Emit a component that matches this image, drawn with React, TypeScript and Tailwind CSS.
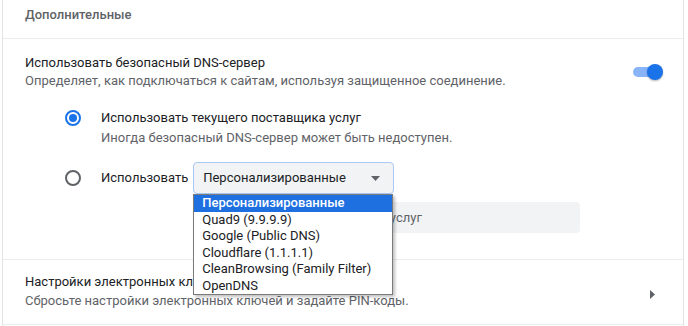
import React from "react";

// Блок «Дополнительные» настроек безопасности с раскрытым списком DNS-провайдеров

const providers = [
  "Персонализированные",
  "Quad9 (9.9.9.9)",
  "Google (Public DNS)",
  "Cloudflare (1.1.1.1)",
  "CleanBrowsing (Family Filter)",
  "OpenDNS",
];

function Radio({ checked }: { checked?: boolean }) {
  return (
    <span
      className={
        checked
          ? "flex h-4 w-4 shrink-0 items-center justify-center rounded-full border-2 border-[#1a73e8]"
          : "flex h-4 w-4 shrink-0 items-center justify-center rounded-full border-2 border-[#5f6368]"
      }
    >
      {checked && <span className="h-2 w-2 rounded-full bg-[#1a73e8]" />}
    </span>
  );
}

function Toggle() {
  return (
    <div className="relative h-4 w-[30px]">
      <div className="absolute left-0 top-[3px] h-[10px] w-[28px] rounded-full bg-[#8ab4f8]" />
      <div className="absolute right-0 top-0 h-4 w-4 rounded-full bg-[#1a73e8] shadow-[0_1px_2px_rgba(0,0,0,0.3)]" />
    </div>
  );
}

export default function App() {
  return (
    <div className="h-[326px] w-[688px] overflow-hidden bg-white font-['Roboto',_'Liberation_Sans',_sans-serif] text-[13px] text-[#202124]">
      <div className="ml-[2px] h-full w-[682px] border-x border-[#e3e3e3]">
        <div className="h-[39px] border-b border-[#ececec] pl-[22px] pt-[6px] font-medium leading-[17px] text-[#5f6368]">
          Дополнительные
        </div>

        <div className="flex items-center pl-[22px] pr-[20px] pt-[15px]">
          <div className="flex-1">
            <div className="leading-[18px]">Использовать безопасный DNS-сервер</div>
            <div className="leading-[18px] text-[#5f6368]">
              Определяет, как подключаться к сайтам, используя защищенное соединение.
            </div>
          </div>
          <Toggle />
        </div>

        <div className="pl-[62px] pt-[18px]">
          <div className="flex items-start">
            <div className="flex h-5 w-[36px] items-center">
              <Radio checked />
            </div>
            <div>
              <div className="leading-[20px]">Использовать текущего поставщика услуг</div>
              <div className="leading-[19px] text-[#5f6368]">
                Иногда безопасный DNS-сервер может быть недоступен.
              </div>
            </div>
          </div>

          <div className="mt-[15px] flex items-center">
            <div className="w-[36px]">
              <Radio />
            </div>
            <span className="mr-[5px]">Использовать</span>
            <div className="relative">
              <div className="flex h-[32px] w-[201px] items-center justify-between rounded-[4px] border border-[#a9c8f5] bg-[#f1f3f4] pl-[9px] pr-[13px]">
                <span>Персонализированные</span>
                <svg width="9" height="5" viewBox="0 0 9 5">
                  <path d="M0 0h9L4.5 5z" fill="#5f6368" />
                </svg>
              </div>
              <div className="absolute left-0 top-[32px] z-10 w-[200px] border border-[#7b7b7b] bg-white shadow-[2px_2px_3px_rgba(0,0,0,0.25)]">
                {providers.map((p, i) => (
                  <div
                    key={p}
                    className={
                      i === 0
                        ? "h-[16.5px] bg-[#1e6fe0] pl-[8px] font-medium leading-[16.5px] text-white"
                        : "h-[16.5px] pl-[8px] leading-[16.5px] text-[#202124]"
                    }
                  >
                    {p}
                  </div>
                ))}
              </div>
            </div>
          </div>

          <div className="ml-[129px] mt-[8px] flex h-[31px] w-[386px] items-center rounded-[4px] bg-[#f1f3f4] pl-[13px] text-[#5f6368]">
            Укажите другого поставщика услуг
          </div>
        </div>

        <div className="mt-[26px] flex items-center border-y border-[#ececec] pb-[14px] pl-[22px] pr-[28px] pt-[12px]">
          <div className="flex-1">
            <div className="leading-[19px]">Настройки электронных ключей</div>
            <div className="leading-[19px] text-[#5f6368]">
              Сбросьте настройки электронных ключей и задайте PIN-коды.
            </div>
          </div>
          <svg width="5" height="9" viewBox="0 0 5 9" className="mt-[6px]">
            <path d="M0 0l5 4.5L0 9z" fill="#5f6368" />
          </svg>
        </div>
      </div>
    </div>
  );
}
